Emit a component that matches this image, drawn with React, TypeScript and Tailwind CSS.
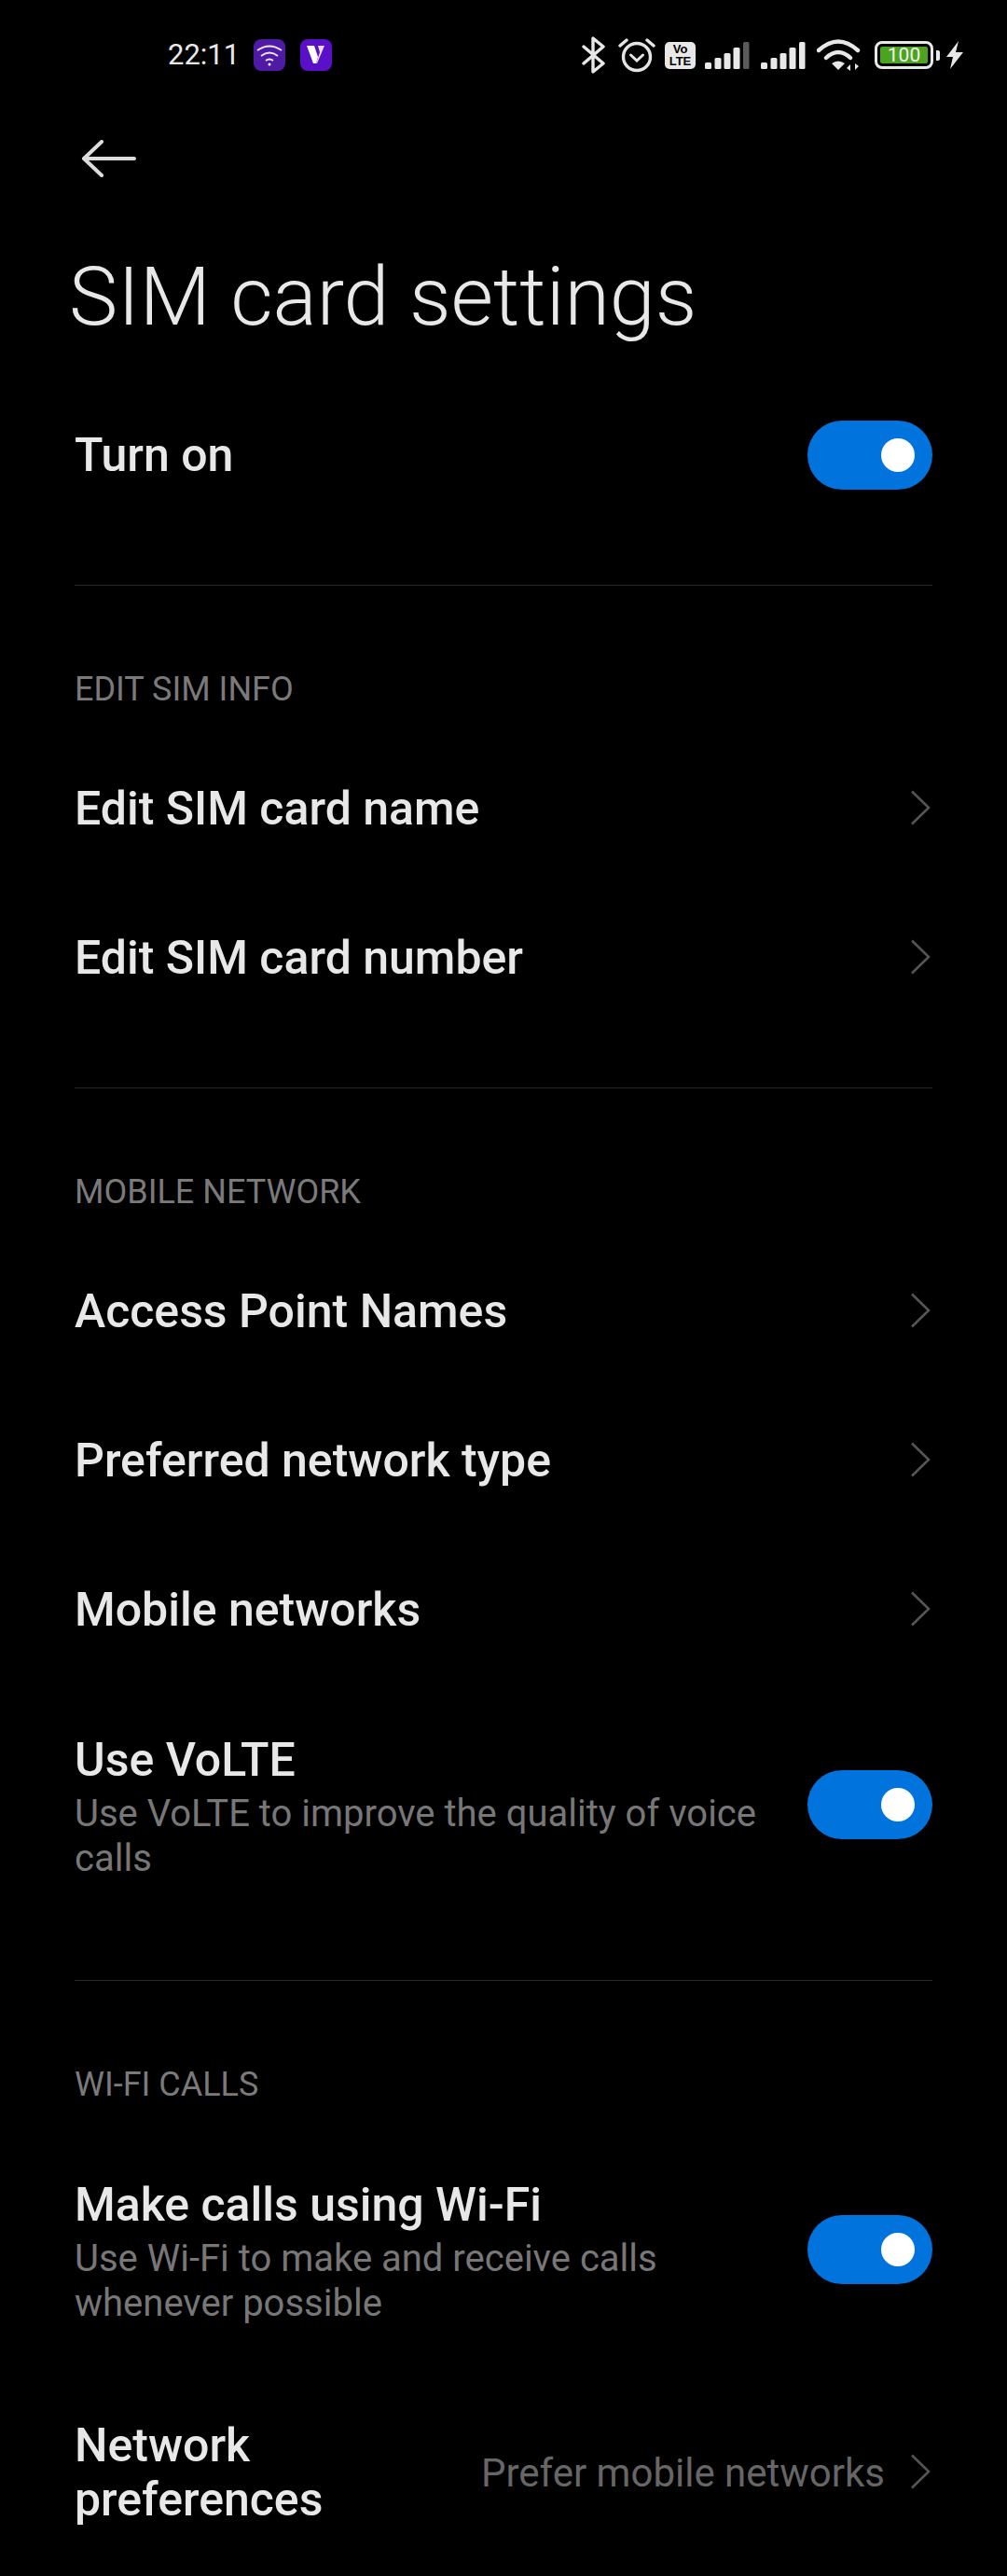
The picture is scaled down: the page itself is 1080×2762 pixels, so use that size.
import { ReactNode } from "react"

function Toggle() {
  return (
    <div className="flex h-[74px] w-[134px] shrink-0 items-center justify-end rounded-full bg-[#0073dd] pr-[19px]">
      <div className="h-[36px] w-[36px] rounded-full bg-white" />
    </div>
  )
}

function Chevron() {
  return (
    <svg width="22" height="38" viewBox="0 0 22 38" fill="none" className="mr-[2px] mb-[3px] shrink-0">
      <path d="M2 1.5 L20 19 L2 36.5" stroke="#555555" strokeWidth="2.6" />
    </svg>
  )
}

function Divider() {
  return <div className="mt-[59px] h-[1px] bg-[#242424]" />
}

function SectionLabel({ children }: { children: ReactNode }) {
  return (
    <div className="flex h-[159px] items-center pt-[62px] text-[36px] text-[#7a7a7a]">{children}</div>
  )
}

function LinkRow({ title }: { title: string }) {
  return (
    <div className="flex h-[160px] items-center justify-between">
      <div className="text-[50px] font-medium text-[#e8e8e8]">{title}</div>
      <Chevron />
    </div>
  )
}

function ToggleRow({ title, sub }: { title: string; sub: string }) {
  return (
    <div className="flex h-[258px] items-center justify-between">
      <div className="w-[740px]">
        <div className="text-[50px] leading-[68px] font-medium text-[#e8e8e8]">{title}</div>
        <div className="text-[40px] leading-[48px] text-[#777777]">{sub}</div>
      </div>
      <Toggle />
    </div>
  )
}

function Signal({ lastColor }: { lastColor: string }) {
  return (
    <svg width="48" height="30" viewBox="0 0 48 30">
      <rect x="0" y="23" width="7" height="7" rx="1.5" fill="#e8e8e8" />
      <rect x="10.5" y="18" width="7" height="12" rx="1.5" fill="#e8e8e8" />
      <rect x="20.5" y="13" width="7" height="17" rx="1.5" fill="#e8e8e8" />
      <rect x="30.5" y="7" width="7" height="23" rx="1.5" fill="#e8e8e8" />
      <rect x="41" y="1" width="6.5" height="29" rx="1.5" fill={lastColor} />
    </svg>
  )
}

function StatusBar() {
  return (
    <div className="flex h-[118px] items-center pl-[180px] pr-[46px]">
      <div className="text-[31px] text-[#e8e8e8]">22:11</div>
      {/* purple wifi app */}
      <svg width="34" height="34" viewBox="0 0 34 34" className="ml-[15px]">
        <rect width="34" height="34" rx="8" fill="#4f1aa6" />
        <path d="M4 12 Q17 3 30 12 M8 18 Q17 11 26 18 M13 23 Q17 20 21 23" stroke="#f0e8ff" strokeWidth="1.8" fill="none" />
        <circle cx="17" cy="27" r="1.5" fill="#f0e8ff" />
      </svg>
      {/* V app */}
      <svg width="34" height="34" viewBox="0 0 34 34" className="ml-[16px]">
        <rect width="34" height="34" rx="8" fill="#5a0fc8" />
        <path d="M7 7 H15 L19 19 L17 26 H14 Z" fill="#ffffff" />
        <path d="M19 7 H26 L18 26 H17 L21 14 Z" fill="#e6dcf8" />
      </svg>
      <div className="ml-auto flex items-center">
        {/* bluetooth */}
        <svg width="26" height="40" viewBox="0 0 26 40" fill="none">
          <path d="M2 11 L23 29 L12 38 V2 L23 11 L2 29" stroke="#e8e8e8" strokeWidth="3.4" strokeLinejoin="round" strokeLinecap="round" />
        </svg>
        {/* alarm */}
        <svg width="40" height="38" viewBox="0 0 40 38" fill="none" className="ml-[13px]">
          <circle cx="20" cy="21" r="14.5" stroke="#e4e4e4" strokeWidth="3.4" />
          <path d="M13.5 19 L20 25 L26.5 19" stroke="#e4e4e4" strokeWidth="3" strokeLinecap="round" />
          <path d="M2 9 L9 3 M31 3 L38 9" stroke="#e4e4e4" strokeWidth="3.4" strokeLinecap="round" />
        </svg>
        {/* volte badge */}
        <div className="ml-[10px] flex h-[29px] w-[33px] flex-col items-center justify-center rounded-[5px] bg-[#e8e8e8] font-['Liberation_Sans',sans-serif] text-[13px] leading-[13px] font-bold text-black">
          <span>Vo</span>
          <span>LTE</span>
        </div>
        <div className="ml-[10px]">
          <Signal lastColor="#5a5a5a" />
        </div>
        <div className="ml-[12px]">
          <Signal lastColor="#e8e8e8" />
        </div>
        {/* wifi */}
        <svg width="48" height="36" viewBox="0 0 48 36" fill="none" className="ml-[12px]">
          <path d="M2 13 Q23 -6 44 13 M10 21 Q23 9 36 21" stroke="#e8e8e8" strokeWidth="4.4" strokeLinecap="round" />
          <path d="M16 27 Q23 22 30 27 L23 34 Z" fill="#e8e8e8" />
          <path d="M36 35 V28 L32 32 Z M41 27 V34 L45 30 Z" fill="#e8e8e8" />
        </svg>
        {/* battery */}
        <div className="ml-[14px] flex h-[30px] w-[63px] items-center rounded-[8px] border-[3px] border-[#e8e8e8] p-[3px]">
          <div className="flex h-full w-full items-center justify-center rounded-[2px] bg-[#4ca31f] text-[21px] leading-none text-[#f0f0f0]">
            100
          </div>
        </div>
        <div className="ml-[3px] h-[11px] w-[4px] rounded-r-[2px] bg-[#e8e8e8]" />
        {/* charging bolt */}
        <svg width="20" height="30" viewBox="0 0 20 30" className="ml-[6px]">
          <path d="M14 0 L1 17 H8 L5 30 L19 12 H11 Z" fill="#e8e8e8" />
        </svg>
      </div>
    </div>
  )
}

export default function App() {
  return (
    <div className="h-[2762px] overflow-hidden bg-black font-['Roboto',sans-serif]">
      <StatusBar />

      {/* Back arrow */}
      <div className="flex h-[104px] items-center pl-[87px]">
        <svg width="60" height="40" viewBox="0 0 60 40" fill="none">
          <path d="M57 20 H3 M22 2 L3 20 L22 38" stroke="#dcdcdc" strokeWidth="4" strokeLinecap="round" strokeLinejoin="round" />
        </svg>
      </div>

      {/* Title */}
      <div className="flex h-[186px] items-center pt-[6px] pl-[74px] text-[88px] font-light text-[#e8e8e8]">
        SIM card settings
      </div>

      <div className="mr-[80px] ml-[80px]">
        <div className="flex h-[160px] items-center justify-between">
          <div className="text-[50px] font-medium text-[#e8e8e8]">Turn on</div>
          <Toggle />
        </div>
        <Divider />

        <SectionLabel>EDIT SIM INFO</SectionLabel>
        <LinkRow title="Edit SIM card name" />
        <LinkRow title="Edit SIM card number" />
        <Divider />

        <SectionLabel>MOBILE NETWORK</SectionLabel>
        <LinkRow title="Access Point Names" />
        <LinkRow title="Preferred network type" />
        <LinkRow title="Mobile networks" />
        <ToggleRow title="Use VoLTE" sub="Use VoLTE to improve the quality of voice calls" />
        <Divider />

        <SectionLabel>WI-FI CALLS</SectionLabel>
        <ToggleRow title="Make calls using Wi-Fi" sub="Use Wi-Fi to make and receive calls whenever possible" />

        <div className="flex h-[220px] items-center justify-between">
          <div className="w-[340px] text-[50px] leading-[58px] font-medium text-[#e8e8e8]">Network preferences</div>
          <div className="flex items-center gap-[27px]">
            <div className="text-[42px] text-[#666666]">Prefer mobile networks</div>
            <Chevron />
          </div>
        </div>
      </div>
    </div>
  )
}
